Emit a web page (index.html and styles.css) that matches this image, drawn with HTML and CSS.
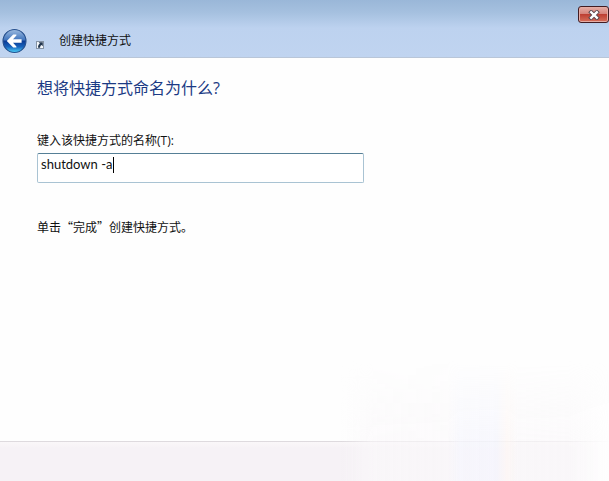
FILE: index.html
```html
<!DOCTYPE html>
<html lang="zh-CN">
<head>
  <meta charset="UTF-8">
  <meta name="viewport" content="width=device-width, initial-scale=1.0">
  <title>创建快捷方式</title>
  <link rel="stylesheet" href="styles.css">
</head>
<body>
  <!-- Title bar -->
  <header>
    <div class="window-controls">
      <button type="button" class="close-button" aria-label="关闭">
        <svg width="12" height="10" viewBox="0 0 12 10">
          <path d="M3.2 2.3 L8.8 7.7 M8.8 2.3 L3.2 7.7" stroke="#55434a" stroke-width="4.2" stroke-linecap="square"/>
          <path d="M3.2 2.3 L8.8 7.7 M8.8 2.3 L3.2 7.7" stroke="#ffffff" stroke-width="2.4" stroke-linecap="square"/>
        </svg>
      </button>
    </div>
    <div class="title-row">
      <button type="button" class="back-button" aria-label="后退">
        <svg width="26" height="26" viewBox="0 0 26 26">
          <defs>
            <linearGradient id="ball" x1="0" y1="0" x2="0" y2="1">
              <stop offset="0" stop-color="#9dbbdf"/>
              <stop offset="0.46" stop-color="#3f74bd"/>
              <stop offset="0.5" stop-color="#0b3a93"/>
              <stop offset="0.75" stop-color="#1763bd"/>
              <stop offset="1" stop-color="#4fd5fa"/>
            </linearGradient>
          </defs>
          <circle cx="12.5" cy="13" r="12.3" fill="#dce9f8"/>
          <circle cx="12.5" cy="13" r="11.5" fill="url(#ball)" stroke="#26508f" stroke-width="1.2"/>
          <path d="M4.8 13 L11.2 6.4 L14.4 6.4 L14.4 7.4 L11 11.2 L19.6 11.2 L19.6 14.8 L11 14.8 L14.4 18.6 L14.4 19.6 L11.2 19.6 Z" fill="#ffffff"/>
        </svg>
      </button>
      <svg class="shortcut-icon" width="8" height="8" viewBox="0 0 8 8">
        <rect x="0.5" y="0.5" width="7" height="7" fill="#f6f9fc" stroke="#8593a5"/>
        <path d="M2.6 1.2 H6.8 V5.2 L5.5 4 C4.4 4.7 4.1 5.5 4.1 6.8 H2.1 C1.8 5 2.6 3.7 3.9 2.6 Z" fill="#22364f"/>
      </svg>
      <span class="title">创建快捷方式</span>
    </div>
  </header>

  <!-- Wizard page -->
  <main>
    <h1>想将快捷方式命名为什么?</h1>
    <label for="shortcut-name">键入该快捷方式的名称(T):</label>
    <div class="name-field">
      <input id="shortcut-name" type="text" value="shutdown -a" spellcheck="false">
      <span class="caret"></span>
    </div>
    <p>单击“完成”创建快捷方式。</p>
  </main>

  <!-- Button area -->
  <footer></footer>
  <div class="glow"></div>
</body>
</html>
```

FILE: styles.css
```css
/* General Styles */
body {
  margin: 0;
  min-height: 100vh;
  display: flex;
  flex-direction: column;
  position: relative;
  overflow: hidden;
  background-color: #fefefe;
  color: #111;
  font-family: "Open Sans", "Noto Sans CJK SC", sans-serif;
  font-size: 12px;
  line-height: 16px;
}

button {
  padding: 0;
  border: none;
  background: none;
  cursor: pointer;
}

svg {
  display: block;
  fill: none;
}

/* Title bar */
header {
  background: linear-gradient(#9ab7d8 0, #a5c0df 12px, #bdd2ef 28px, #c0d4f0 100%);
  border-bottom: 1px solid #b9c6d8;
}

.window-controls {
  display: flex;
  justify-content: flex-end;
  height: 28px;
  padding-top: 6px;
  box-sizing: border-box;
}

.close-button {
  display: flex;
  align-items: center;
  justify-content: center;
  width: 31px;
  height: 17px;
  border: 1px solid #421c22;
  border-radius: 3px;
  background: linear-gradient(#e6aea6 0, #d48078 48%, #bd3f33 50%, #d7705c 100%);
  box-shadow: inset 0 0 0 1px #e5aca4;
}

.title-row {
  display: flex;
  align-items: center;
  height: 29px;
  padding-left: 2px;
  padding-bottom: 3px;
  box-sizing: border-box;
}

.shortcut-icon {
  margin-left: 8px;
  margin-top: 8px;
}

.title {
  margin-left: 15px;
}

/* Wizard page */
main {
  flex: 1;
  padding: 18px 37px;
}

h1 {
  margin: 0 0 33px;
  color: #1b3a84;
  font-size: 16px;
  font-weight: normal;
  line-height: 24px;
}

label {
  display: block;
  margin-bottom: 4px;
}

.name-field {
  position: relative;
  max-width: 327px;
}

.name-field input {
  display: block;
  width: 100%;
  height: 30px;
  box-sizing: border-box;
  padding: 0 3px 8px;
  border: 1px solid #a9c3d3;
  border-top-color: #557f96;
  border-radius: 2px;
  outline: none;
  background-color: #fff;
  color: #111;
  font-family: Lato, "Noto Sans CJK SC", sans-serif;
  font-size: 13px;
}

/* Text cursor, just after the typed name */
.caret {
  position: absolute;
  top: 4px;
  left: 76px;
  width: 1px;
  height: 16px;
  background-color: #000;
}

p {
  margin: 36px 0 0;
  font-family: "Noto Sans CJK SC", sans-serif;
}

/* Button area */
footer {
  height: 39px;
  border-top: 1px solid #dedade;
  background: linear-gradient(#faf7f9 0, #f6f2f6 6px);
}

/* Pale light over the lower right corner */
.glow {
  position: absolute;
  right: 0;
  bottom: 0;
  width: 44%;
  height: 120px;
  pointer-events: none;
  background:
    linear-gradient(to right, transparent 40%, rgba(244, 246, 255, 0.5) 44%, rgba(242, 244, 255, 0.5) 58%, rgba(255, 246, 241, 0.5) 62%, transparent 66%),
    linear-gradient(to right, transparent, rgba(250, 248, 250, 0.65) 12%, rgba(250, 248, 250, 0.75) 85%, #fefefe);
  mask-image: linear-gradient(transparent, #000 70%);
}
```
